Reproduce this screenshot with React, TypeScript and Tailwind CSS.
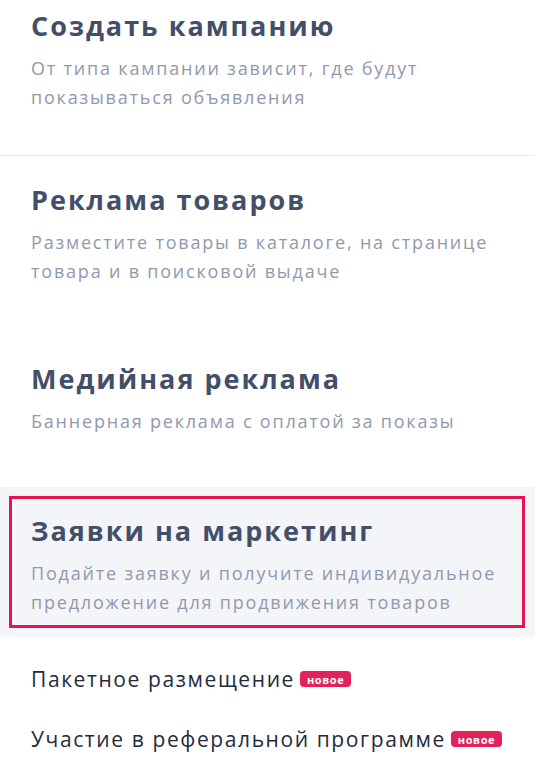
const items = [
  {
    title: "Реклама товаров",
    text: "Разместите товары в каталоге, на странице товара и в поисковой выдаче",
    gap: "pb-[73px]",
  },
  {
    title: "Медийная реклама",
    text: "Баннерная реклама с оплатой за показы",
    gap: "pb-[51px]",
  },
];

function Badge() {
  return (
    <span className="ml-[5px] inline-flex h-[16px] shrink-0 items-center rounded-[4px] bg-[#e3215a] px-[7px] text-[11px] font-bold leading-none tracking-[0.6px] text-white">
      новое
    </span>
  );
}

export default function App() {
  return (
    <div className="min-h-[770px] w-[535px] bg-white font-['Open_Sans',sans-serif]">
      <div className="border-b border-[#e9e9ef] px-[31px] pb-[43px] pt-[6px]">
        <h2 className="text-[27px] font-bold leading-[40px] tracking-[2px] text-[#434f69]">Создать кампанию</h2>
        <p className="mt-[8px] w-[470px] text-[18px] leading-[29px] tracking-[1.8px] text-[#9199ad]">
          От типа кампании зависит, где будут показываться объявления
        </p>
      </div>

      <div className="pt-[24px]">
        {items.map((item) => (
          <div key={item.title} className={`px-[31px] ${item.gap}`}>
            <h2 className="text-[27px] font-bold leading-[40px] tracking-[2px] text-[#434f69]">{item.title}</h2>
            <p className="mt-[8px] w-[480px] text-[18px] leading-[29px] tracking-[1.8px] text-[#9199ad]">{item.text}</p>
          </div>
        ))}
      </div>

      <div className="bg-[#f4f5f9] py-[9px] pl-[9px] pr-[10px]">
        <div className="border-[3px] border-[#ea124f] px-[19px] pb-[8px] pt-[12px]">
          <h2 className="text-[27px] font-bold leading-[40px] tracking-[2px] text-[#434f69]">Заявки на маркетинг</h2>
          <p className="mt-[8px] text-[18px] leading-[29px] tracking-[1.8px] text-[#9199ad]">
            Подайте заявку и получите индивидуальное предложение для продвижения товаров
          </p>
        </div>
      </div>

      <div className="flex flex-col gap-[32px] px-[31px] pt-[28px]">
        <div className="flex items-center whitespace-nowrap text-[21px] leading-[28px] tracking-[1.6px] text-[#222b3b]">
          Пакетное размещение
          <Badge />
        </div>
        <div className="flex items-center whitespace-nowrap text-[21px] leading-[28px] tracking-[1.6px] text-[#222b3b]">
          Участие в реферальной программе
          <Badge />
        </div>
      </div>
    </div>
  );
}
